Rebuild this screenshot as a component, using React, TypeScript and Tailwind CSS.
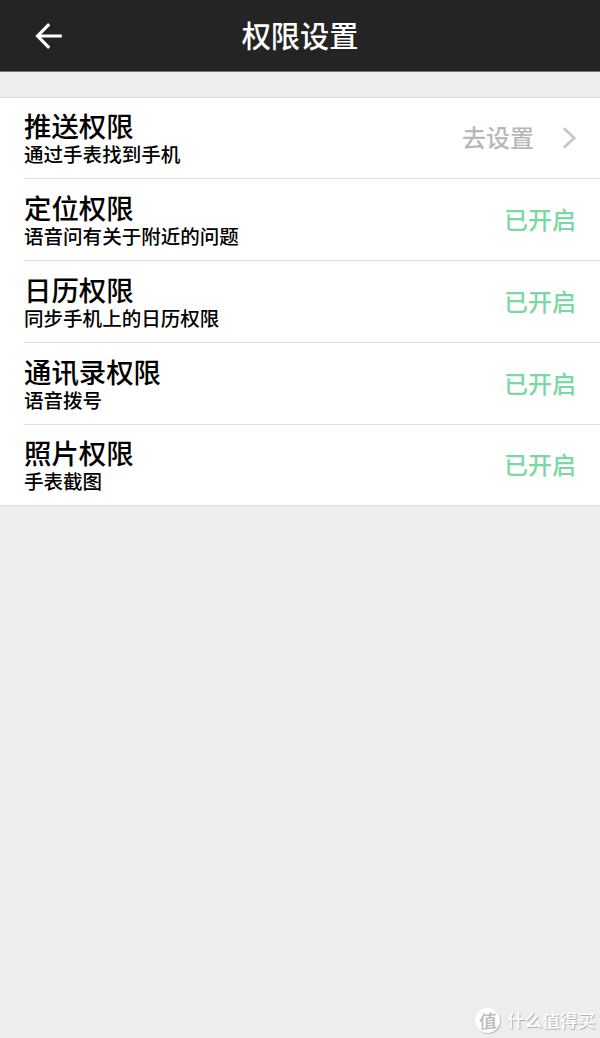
type Permission = {
  title: string;
  description: string;
  enabled: boolean;
};

const permissions: Permission[] = [
  { title: "推送权限", description: "通过手表找到手机", enabled: false },
  { title: "定位权限", description: "语音问有关于附近的问题", enabled: true },
  { title: "日历权限", description: "同步手机上的日历权限", enabled: true },
  { title: "通讯录权限", description: "语音拨号", enabled: true },
  { title: "照片权限", description: "手表截图", enabled: true },
];

function Header() {
  return (
    <header className="grid h-[72px] grid-cols-[96px_1fr_96px] items-center border-b border-[#777273] bg-[#242424] text-white">
      <button type="button" aria-label="返回" className="flex justify-center">
        <svg width="28" height="28" viewBox="0 0 28 28" fill="none" stroke="currentColor" strokeWidth="3.2">
          <path d="M15.2 2.2 3.6 14l11.6 11.8M4 14h23.8" />
        </svg>
      </button>
      <h1 className="pb-[3px] text-center text-[29.2px] leading-[42px] font-medium">权限设置</h1>
    </header>
  );
}

function PermissionRow({ title, description, enabled }: Permission) {
  return (
    <li className="ml-6 flex h-[82px] items-center justify-between border-b border-[#dedede] pr-6 first:h-[81px] last:h-[80px] last:border-b-0">
      <div className="pt-px font-medium text-black">
        <h2 className="text-[27.4px] leading-[30px]">{title}</h2>
        <p className="pt-px text-[19.55px] leading-[26px]">{description}</p>
      </div>
      {enabled ? (
        <span className="pb-[2px] text-[24px] leading-[34px] font-medium text-[#7bd8a4]">已开启</span>
      ) : (
        <div className="flex items-center">
          <span className="pb-[2px] text-[24px] leading-[34px] font-medium text-[#b8b8b8]">去设置</span>
          <svg
            className="ml-[28px] text-[#c7c7cc]"
            width="14"
            height="22"
            viewBox="0 0 14 22"
            fill="none"
            stroke="currentColor"
            strokeWidth="2.8"
          >
            <path d="M1.8 1.3 12.3 11 1.8 20.7" />
          </svg>
        </div>
      )}
    </li>
  );
}

function Watermark() {
  return (
    <div className="flex items-center justify-end gap-[7px] pr-[5px] pb-[5px]">
      <span className="flex size-[25px] items-center justify-center rounded-full bg-white text-[18px] leading-none font-medium text-[#b9b9b9] shadow-[1px_1px_1px_#bbb]">
        <span className="-rotate-6 skew-x-[-6deg]">值</span>
      </span>
      <span className="text-[17.6px] leading-[26px] font-medium text-white [text-shadow:1px_1px_1px_#aaa]">
        什么值得买
      </span>
    </div>
  );
}

export default function App() {
  return (
    <div className="flex h-[1038px] w-[600px] flex-col bg-[#ededed] font-['Noto_Sans_CJK_SC',sans-serif]">
      <Header />
      <main className="flex-1 pt-[25px]">
        <ul className="border-y border-[#dcdcdc] bg-white">
          {permissions.map((permission) => (
            <PermissionRow key={permission.title} {...permission} />
          ))}
        </ul>
      </main>
      <Watermark />
    </div>
  );
}
